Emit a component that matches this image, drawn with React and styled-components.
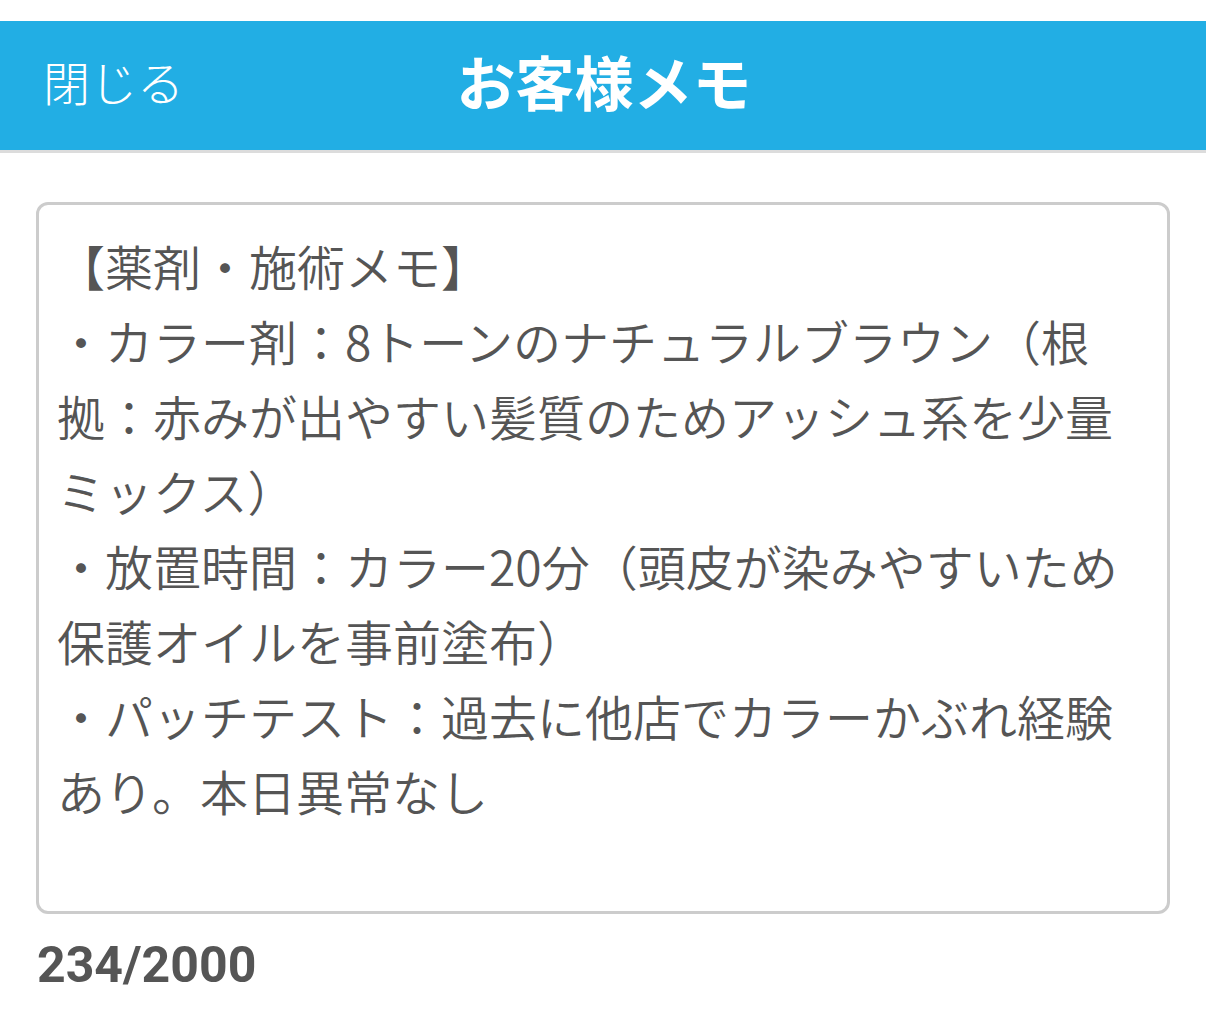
import React from "react";
import styled, { createGlobalStyle } from "styled-components";

const GlobalStyle = createGlobalStyle`
  html, body {
    margin: 0;
    padding: 0;
    background: #ffffff;
  }
  body {
    font-family: "Noto Sans CJK JP", "Noto Sans", sans-serif;
  }
  * { box-sizing: border-box; }
`;

const Page = styled.div`
  padding-top: 21px;
  min-height: 1010px;
  background: #ffffff;
`;

const Header = styled.header`
  position: relative;
  height: 132px;
  background: #22aee4;
  border-bottom: 3px solid #dcdcdc;
  display: flex;
  align-items: center;
  justify-content: center;
`;

const CloseButton = styled.button`
  position: absolute;
  left: 43px;
  top: 50%;
  transform: translateY(-62%);
  background: none;
  border: none;
  padding: 0;
  color: #ffffff;
  font-family: "Noto Sans CJK JP", sans-serif;
  font-weight: 300;
  font-size: 47px;
  line-height: 1;
  cursor: pointer;
`;

const Title = styled.h1`
  margin: 0;
  color: #ffffff;
  font-family: "Noto Sans CJK JP", sans-serif;
  font-weight: 700;
  font-size: 59px;
  line-height: 1;
  letter-spacing: 0;
  transform: translate(1px, -5px);
`;

const Body = styled.main`
  padding: 49px 36px 0;
  display: flex;
  flex-direction: column;
`;

const MemoArea = styled.textarea`
  display: block;
  width: 100%;
  height: 712px;
  border: 3px solid #cccccc;
  border-radius: 12px;
  padding: 23px 18px 0 18px;
  font-family: "Noto Sans CJK JP", sans-serif;
  font-size: 48px;
  font-weight: 350;
  line-height: 75px;
  color: #555555;
  background: #ffffff;
  resize: none;
  overflow: hidden;
  outline: none;
`;

const Counter = styled.div`
  margin-top: 23px;
  padding-left: 1px;
  font-family: Roboto, "Noto Sans", sans-serif;
  font-weight: 700;
  font-size: 50px;
  line-height: 56px;
  color: #555555;
`;

const memo = `【薬剤・施術メモ】
・カラー剤：8トーンのナチュラルブラウン（根拠：赤みが出やすい髪質のためアッシュ系を少量ミックス）
・放置時間：カラー20分（頭皮が染みやすいため保護オイルを事前塗布）
・パッチテスト：過去に他店でカラーかぶれ経験あり。本日異常なし

【接客・会話メモ】
・前回の来店時に話していた旅行の感想を伺う
・次回は秋に向けて少し暗めのトーンを提案予定`;

export default function App() {
  return (
    <>
      <GlobalStyle />
      <Page>
        <Header>
          <CloseButton type="button">閉じる</CloseButton>
          <Title>お客様メモ</Title>
        </Header>
        <Body>
          <MemoArea defaultValue={memo} spellCheck={false} />
          <Counter>234/2000</Counter>
        </Body>
      </Page>
    </>
  );
}
